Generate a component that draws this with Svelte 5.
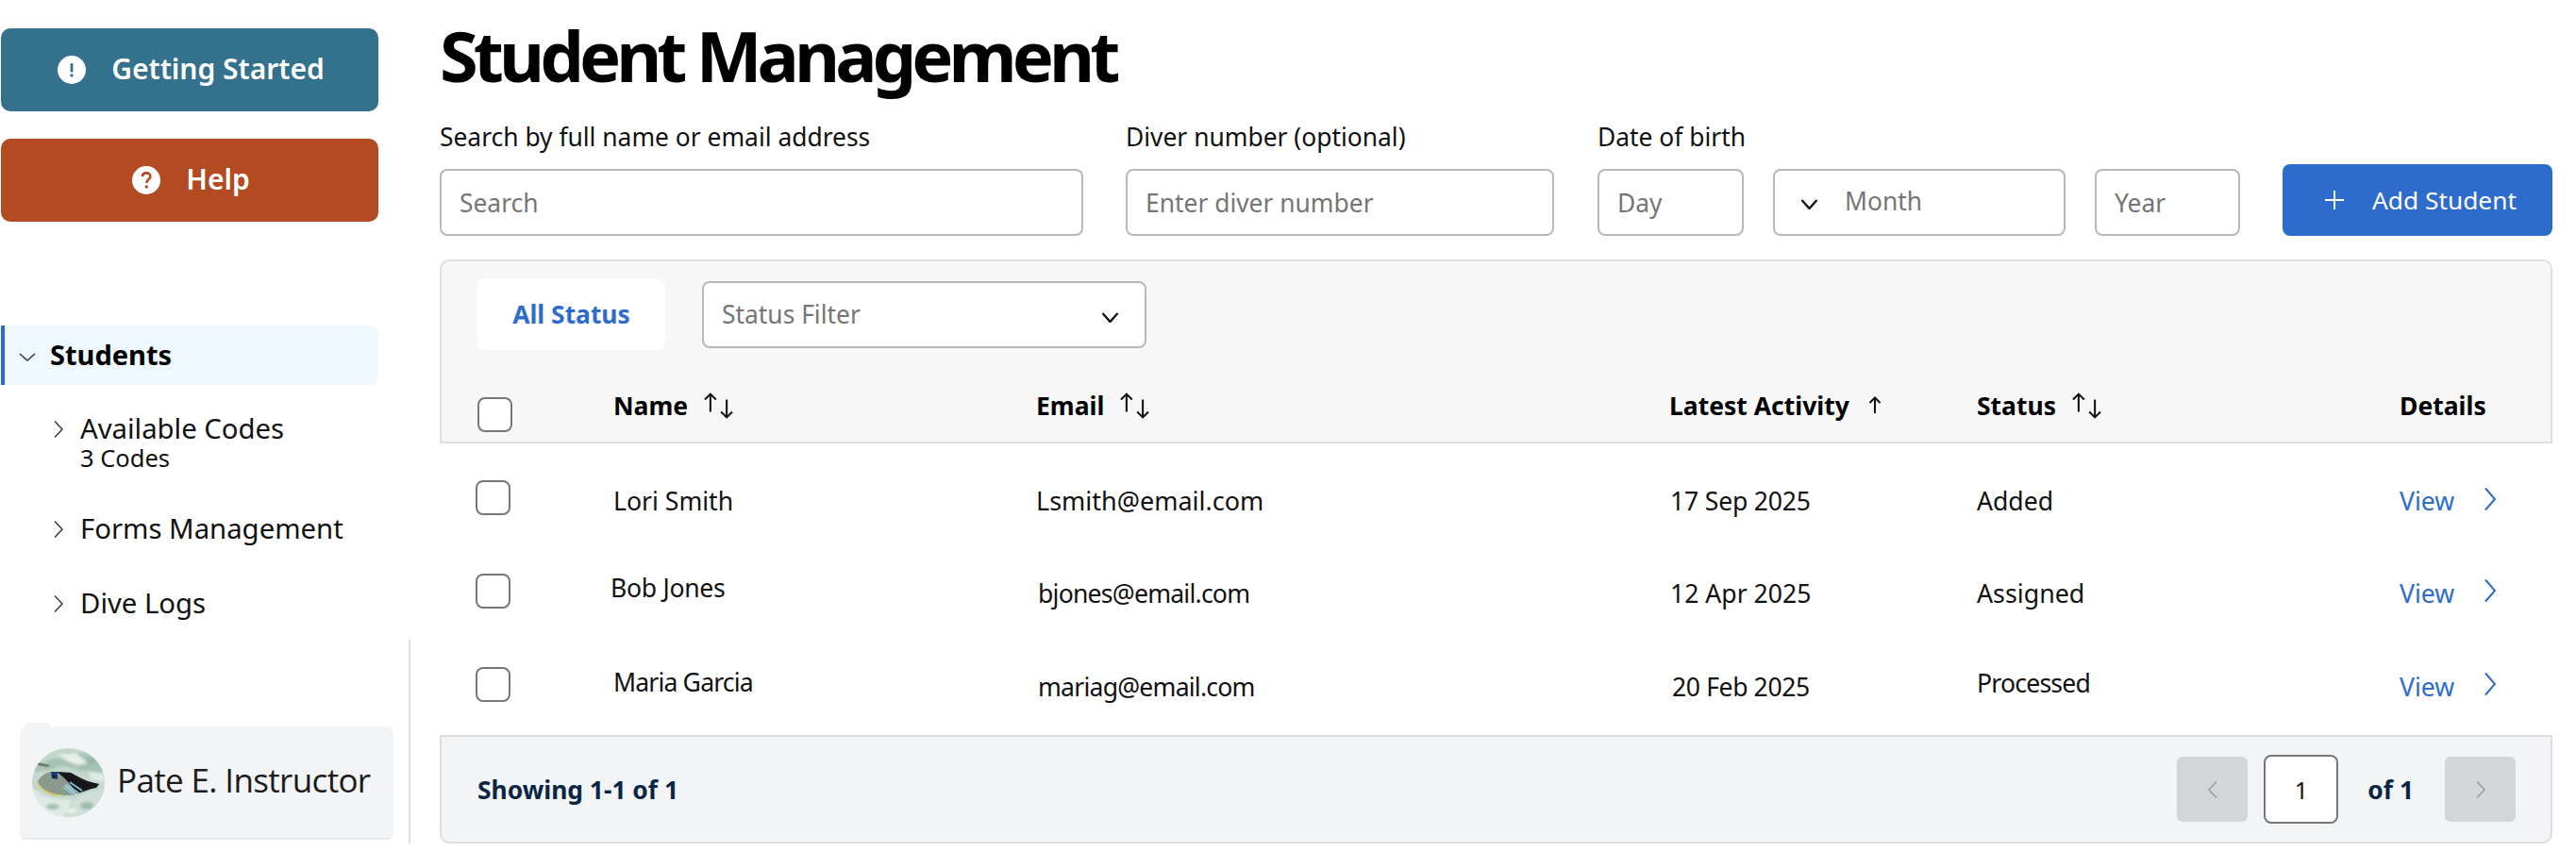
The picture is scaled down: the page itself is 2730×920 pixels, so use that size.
<script>
  const rows = [
    { cls: 'r1', name: 'Lori Smith', email: 'Lsmith@email.com', date: '17 Sep 2025', status: 'Added' },
    { cls: 'r2', name: 'Bob Jones', email: 'bjones@email.com', date: '12 Apr 2025', status: 'Assigned' },
    { cls: 'r3', name: 'Maria Garcia', email: 'mariag@email.com', date: '20 Feb 2025', status: 'Processed' }
  ];
</script>

{#snippet sortIcon()}
  <svg class="sort" viewBox="0 0 30 26" fill="none" stroke="#111" stroke-width="1.9">
    <path d="M7 19V1.5M1.5 7L7 1.5L12.5 7" />
    <path d="M23 7V24.5M17.5 19L23 24.5L28.5 19" />
  </svg>
{/snippet}

{#snippet selectChevron()}
  <svg class="sel-chev" viewBox="0 0 19 11" fill="none" stroke="#111" stroke-width="2.4">
    <path d="M1.5 1L9.5 10L17.5 1" />
  </svg>
{/snippet}

{#snippet navChevron()}
  <svg class="nav-chev" viewBox="0 0 10 20" fill="none" stroke="#333" stroke-width="1.4">
    <path d="M1 1.5L9 10L1 18.5" />
  </svg>
{/snippet}

<div class="page">
  <aside class="sidebar">
    <button class="cta teal">
      <svg class="cta-icon" viewBox="0 0 30 30"><circle cx="15" cy="15" r="15" fill="#fff" /><rect x="13.6" y="8" width="2.8" height="9.5" rx="1.2" fill="#33718c" /><circle cx="15" cy="21" r="1.7" fill="#33718c" /></svg>
      <span>Getting Started</span>
    </button>
    <button class="cta rust">
      <svg class="cta-icon" viewBox="0 0 30 30"><circle cx="15" cy="15" r="15" fill="#fff" /><path d="M10.8 11.2C11 8.6 13 7.4 15.2 7.4C17.6 7.4 19.4 8.9 19.4 11C19.4 14 15.3 14.2 15.3 18" fill="none" stroke="#b34a22" stroke-width="2.6" /><circle cx="15.2" cy="22" r="1.7" fill="#b34a22" /></svg>
      <span>Help</span>
    </button>

    <nav class="nav">
      <div class="nav-active">
        <svg class="open-chev" viewBox="0 0 18 9" fill="none" stroke="#333" stroke-width="1.4"><path d="M1 1L9 8L17 1" /></svg>
        <span>Students</span>
      </div>
      <div class="nav-item first">
        {@render navChevron()}
        <div class="nav-text">
          <div>Available Codes</div>
          <div class="nav-sub">3 Codes</div>
        </div>
      </div>
      <div class="nav-item second">
        {@render navChevron()}
        <div class="nav-text">Forms Management</div>
      </div>
      <div class="nav-item third">
        {@render navChevron()}
        <div class="nav-text">Dive Logs</div>
      </div>
    </nav>

    <div class="user-zone">
      <div class="user-tab"></div>
      <div class="user-card">
        <svg class="avatar" viewBox="0 0 77 73">
          <defs>
            <clipPath id="av"><ellipse cx="38.5" cy="36.5" rx="38.5" ry="36.5" /></clipPath>
            <filter id="soft" x="-10%" y="-10%" width="120%" height="120%"><feGaussianBlur stdDeviation="1.6" /></filter>
            <filter id="fine" x="-10%" y="-10%" width="120%" height="120%"><feGaussianBlur stdDeviation="0.35" /></filter>
          </defs>
          <g clip-path="url(#av)">
            <rect width="77" height="73" fill="#c3d7cd" />
            <g filter="url(#soft)">
              <path d="M0 24C12 10 26 14 38 4L70 8L77 26L52 24L34 18L14 24Z" fill="#a3c2b4" />
              <path d="M26 7L46 5L60 16L48 18L36 13Z" fill="#e6efea" />
              <path d="M60 24L77 28V36L62 33Z" fill="#e0ebe5" />
              <path d="M0 42C10 52 26 54 42 55L34 73H0Z" fill="#dfeae4" />
              <path d="M46 52L77 42V73H36Z" fill="#cfdfd7" />
              <ellipse cx="22" cy="62" rx="7" ry="3" fill="#9dbbad" />
              <ellipse cx="58" cy="61" rx="7" ry="4" fill="#9dbbad" />
              <ellipse cx="42" cy="66" rx="5" ry="2" fill="#eef4f0" />
              <ellipse cx="14" cy="30" rx="6" ry="3" fill="#e4eee8" />
              <ellipse cx="62" cy="14" rx="5" ry="3" fill="#94b5a6" />
            </g>
            <g filter="url(#fine)">
              <path d="M6 15L19 18L17 20L5 18Z" fill="#6f7a68" />
              <path d="M6 36C8 30 14 25 22 25L40 26C48 30 58 36 71 38L68 42C58 44 50 50 38 50C24 51 10 46 6 36Z" fill="#8a9a8c" />
              <path d="M6 37C10 45 20 50 32 50" fill="none" stroke="#d6cb63" stroke-width="1.6" />
              <path d="M26 25L41 26C48 30 58 36 71 38L68 42C60 43 54 46 48 48C42 40 36 32 26 25Z" fill="#13171f" />
              <path d="M20 25L27 25L27 33L21 32Z" fill="#1e3a75" />
              <path d="M33 41L45 50M36 38L50 48M40 36L53 45" stroke="#86c4d6" stroke-width="1.7" />
              <path d="M35 39.5L47 49" stroke="#f2f6f4" stroke-width="1" />
              <circle cx="23" cy="30" r="1.4" fill="#10171f" />
            </g>
          </g>
        </svg>
        <span class="user-name">Pate E. Instructor</span>
      </div>
    </div>
  </aside>

  <main class="main">
    <h1>Student Management</h1>

    <div class="filters">
      <div class="field f-search">
        <span class="label">Search by full name or email address</span>
        <div class="input">Search</div>
      </div>
      <div class="field f-diver">
        <span class="label">Diver number (optional)</span>
        <div class="input">Enter diver number</div>
      </div>
      <div class="field f-date">
        <span class="label">Date of birth</span>
        <div class="date-row">
          <div class="input day">Day</div>
          <div class="input month">{@render selectChevron()}<span>Month</span></div>
          <div class="input year">Year</div>
        </div>
      </div>
      <button class="add">
        <svg class="plus" viewBox="0 0 22 22" fill="none" stroke="#fff" stroke-width="2"><path d="M11 1V21M1 11H21" /></svg>
        <span>Add Student</span>
      </button>
    </div>

    <section class="panel">
      <div class="panel-head">
        <div class="toolbar">
          <div class="tab">All Status</div>
          <div class="input status">
            <span>Status Filter</span>
            {@render selectChevron()}
          </div>
        </div>
        <div class="grid head">
          <span class="box head-box"></span>
          <div class="th"><b>Name</b>{@render sortIcon()}</div>
          <div class="th"><b>Email</b>{@render sortIcon()}</div>
          <div class="th"><b>Latest Activity</b>
            <svg class="sort-up" viewBox="0 0 14 18" fill="none" stroke="#111" stroke-width="2"><path d="M7 18V1.5M1.5 7L7 1.5L12.5 7" /></svg>
          </div>
          <div class="th"><b>Status</b>{@render sortIcon()}</div>
          <div class="th"><b>Details</b></div>
        </div>
      </div>

      <div class="body">
        {#each rows as row}
          <div class="grid row {row.cls}">
            <span class="box"></span>
            <span class="cell name">{row.name}</span>
            <span class="cell email">{row.email}</span>
            <span class="cell date">{row.date}</span>
            <span class="cell state">{row.status}</span>
            <span class="cell view">
              <span>View</span>
              <svg class="view-chev" viewBox="0 0 14 26" fill="none" stroke="#2d6bcc" stroke-width="2"><path d="M2 1.5L12 13L2 24.5" /></svg>
            </span>
          </div>
        {/each}
      </div>

      <footer class="foot">
        <strong>Showing 1-1 of 1</strong>
        <div class="pager">
          <div class="pg-btn"><svg viewBox="0 0 12 20" fill="none" stroke="#9b9ca0" stroke-width="1.5"><path d="M10 1.5L2 10L10 18.5" /></svg></div>
          <div class="pg-num">1</div>
          <strong class="of">of 1</strong>
          <div class="pg-btn"><svg viewBox="0 0 12 20" fill="none" stroke="#9b9ca0" stroke-width="1.5"><path d="M2 1.5L10 10L2 18.5" /></svg></div>
        </div>
      </footer>
    </section>
  </main>
</div>

<style>
  :global(body) {
    margin: 0;
    background: #fff;
  }
  .page {
    display: flex;
    width: 2730px;
    height: 920px;
    overflow: hidden;
    font-family: "Noto Sans", sans-serif;
    color: #111;
  }

  /* Sidebar */
  .sidebar {
    width: 435px;
    flex: none;
    display: flex;
    flex-direction: column;
    padding-top: 30px;
    box-sizing: border-box;
  }
  .cta {
    width: 400px;
    height: 88px;
    margin-left: 1px;
    border: none;
    border-radius: 10px;
    color: #fff;
    display: flex;
    align-items: center;
    justify-content: center;
    gap: 27px;
    font: 600 30px "Noto Sans", sans-serif;
    padding: 0 0 0 3px;
  }
  .cta span { margin-top: -3px; }
  .teal { background: #33718c; }
  .rust { background: #b34a22; margin-top: 29px; }
  .cta-icon { width: 30px; height: 30px; flex: none; }

  .nav { margin-top: 110px; }
  .nav-active {
    width: 400px;
    height: 63px;
    margin-left: 1px;
    box-sizing: border-box;
    border-left: 4px solid #2d6bcc;
    border-radius: 0 10px 10px 0;
    background: #f0f8ff;
    display: flex;
    align-items: center;
    padding: 0 0 3px 15px;
    font-weight: 700;
    font-size: 29px;
    color: #000;
  }
  .open-chev { width: 18px; height: 9px; margin-right: 15px; margin-top: 7px; }
  .nav-item {
    display: flex;
    margin-left: 57px;
    font-size: 29.3px;
    line-height: 40px;
    color: #111;
  }
  .nav-chev { width: 10px; height: 20px; flex: none; margin-right: 18px; margin-top: 11px; }
  .nav-text { white-space: nowrap; }
  .nav-sub { font-size: 25.5px; line-height: 22px; }
  .first { margin-top: 26px; }
  .second { margin-top: 44px; }
  .third { margin-top: 39px; }

  .user-zone {
    height: 216px;
    margin-top: auto;
    margin-bottom: 26px;
    border-right: 2px solid #dddddf;
    display: flex;
    flex-direction: column;
    justify-content: flex-end;
    padding: 0 16px 4px 21px;
    box-sizing: border-box;
  }
  .user-tab {
    width: 28px;
    height: 4px;
    margin-left: 5px;
    background: #f3f4f6;
    border-radius: 4px 4px 0 0;
  }
  .user-card {
    height: 120px;
    box-sizing: border-box;
    background: #f3f4f6;
    border-radius: 6px;
    border-bottom: 2px solid #e9e9ec;
    display: flex;
    align-items: center;
    padding-left: 13px;
    gap: 13px;
  }
  .avatar { width: 77px; height: 73px; flex: none; }
  .user-name {
    font: 400 35px "Open Sans", sans-serif;
    white-space: nowrap;
    color: #1c1c1c;
    letter-spacing: -0.65px;
    margin-top: -5px;
  }

  /* Main */
  .main {
    flex: 1;
    min-width: 0;
    padding: 0 25px 0 31px;
    display: flex;
    flex-direction: column;
  }
  h1 {
    margin: 0;
    height: 125px;
    font-size: 74px;
    font-weight: 700;
    line-height: 117px;
    letter-spacing: -4.95px;
    color: #000;
    white-space: nowrap;
  }
  .filters {
    display: flex;
    align-items: flex-end;
  }
  .field { display: flex; flex-direction: column; flex: none; }
  .label {
    font-size: 26.4px;
    line-height: 36px;
    padding-top: 2px;
    margin-bottom: 16px;
    white-space: nowrap;
    color: #111;
  }
  .input {
    height: 71px;
    box-sizing: border-box;
    border: 2px solid #b8b8b8;
    border-radius: 8px;
    background: #fff;
    display: flex;
    align-items: center;
    padding-left: 19px;
    font-size: 26.4px;
    color: #757575;
    white-space: nowrap;
  }
  .f-search { width: 682px; margin-right: 45px; }
  .f-diver { width: 454px; margin-right: 46px; }
  .f-date { margin-right: 45px; }
  .date-row { display: flex; gap: 31px; }
  .day { width: 155px; }
  .month { width: 310px; padding-left: 27px; }
  .month .sel-chev { margin-top: 4px; }
  .month span { margin-left: 28px; margin-top: -3px; }
  .year { width: 154px; }
  .sel-chev { width: 19px; height: 11px; flex: none; }
  .status .sel-chev { margin-top: 6px; }
  .add {
    width: 286px;
    height: 76px;
    flex: none;
    border: none;
    border-radius: 8px;
    background: #2d6bcc;
    color: #fff;
    display: flex;
    align-items: center;
    padding: 0 0 0 44px;
    gap: 29px;
    font: 400 26.3px "Noto Sans", sans-serif;
  }
  .plus { width: 22px; height: 22px; flex: none; }

  .panel {
    margin-top: 25px;
    display: flex;
    flex-direction: column;
    height: 619px;
  }
  .panel-head {
    height: 195px;
    box-sizing: border-box;
    background: #f7f7f7;
    border: 2px solid #e0e0e0;
    border-radius: 10px 10px 0 0;
    flex: none;
  }
  .toolbar {
    display: flex;
    align-items: center;
    gap: 39px;
    padding: 18px 0 0 38px;
  }
  .tab {
    width: 199px;
    height: 76px;
    background: #fff;
    border-radius: 8px;
    display: flex;
    align-items: center;
    justify-content: center;
    color: #2d6bcc;
    font-weight: 700;
    font-size: 26.4px;
  }
  .status {
    width: 471px;
    justify-content: space-between;
    padding-right: 27px;
  }
  .grid {
    display: grid;
    grid-template-columns: 147px 448px 671px 326px 448px 1fr;
    align-items: center;
  }
  .head { margin-top: 42px; padding-left: 35px; align-items: flex-start; }
  .th {
    display: flex;
    align-items: flex-start;
    gap: 16px;
    font-size: 26.5px;
    line-height: 34px;
    color: #000;
  }
  .th b { font-weight: 700; white-space: nowrap; }
  .sort { width: 33px; height: 28px; flex: none; margin-top: 3px; }
  .sort-up { width: 14px; height: 18px; flex: none; margin: 7px 0 0 4px; }
  .box {
    display: block;
    width: 37px;
    height: 37px;
    box-sizing: border-box;
    background: #fff;
    border: 2px solid #777;
    border-radius: 8px;
  }
  .head-box { margin-left: 3px; margin-top: 8px; }

  .body {
    flex: 1;
    padding: 8px 2px 0 37px;
    background: #fff;
  }
  .row {
    height: 99px;
    font-size: 26.6px;
    line-height: 34px;
    color: #111;
  }
  .row .box { margin-left: 1px; }
  .cell { margin-top: 4px; white-space: nowrap; }
  .r1 .cell { margin-top: 7px; }
  .r1 .email { font-size: 27px; }
  .r1 .date { letter-spacing: -0.2px; margin-left: 1px; }
  .r2 .name { margin: -7px 0 0 -3px; letter-spacing: -0.3px; }
  .r2 .email, .r3 .email { margin-left: 2px; letter-spacing: -0.78px; }
  .r2 .date { margin-left: 1px; }
  .r2 .state { font-size: 26.8px; }
  .r3 .name { margin-top: -5px; letter-spacing: -0.85px; }
  .r3 .date { margin-left: 3px; letter-spacing: -0.4px; }
  .r3 .state { margin-top: -4px; letter-spacing: -0.8px; }
  .view { display: flex; align-items: center; gap: 31px; color: #2d6bcc; }
  .view-chev { width: 14px; height: 26px; flex: none; margin-top: -5px; }

  .foot {
    height: 115px;
    flex: none;
    box-sizing: border-box;
    background: #f3f4f6;
    border: 2px solid #dddddf;
    border-radius: 0 0 10px 10px;
    display: flex;
    align-items: center;
    justify-content: space-between;
    padding: 0 37px 0 38px;
    font-size: 26.4px;
    color: #0b2545;
  }
  .foot strong { font-weight: 700; }
  .pager { display: flex; align-items: center; }
  .pg-btn {
    width: 75px;
    height: 69px;
    background: #d4d5d7;
    border-radius: 6px;
    display: flex;
    align-items: center;
    justify-content: center;
  }
  .pg-btn svg { width: 12px; height: 20px; }
  .pg-num {
    width: 79px;
    height: 73px;
    box-sizing: border-box;
    margin: 0 31px 0 17px;
    background: #fff;
    border: 2px solid #777;
    border-radius: 8px;
    display: flex;
    align-items: center;
    justify-content: center;
    color: #111;
    font-size: 25px;
  }
  .of { margin-right: 33px; }
</style>
